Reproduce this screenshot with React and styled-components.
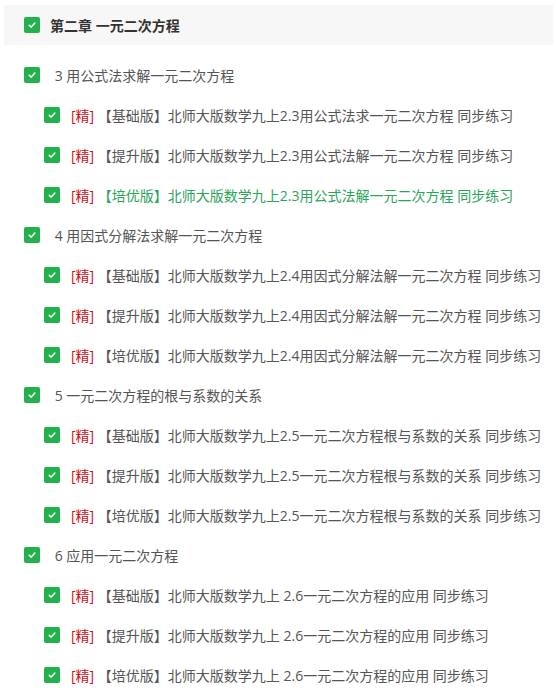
import React from 'react'
import styled, { createGlobalStyle } from 'styled-components'

const GlobalStyle = createGlobalStyle`
  body {
    margin: 0;
    background: #fff;
    font-family: "Open Sans", "Noto Sans CJK SC", sans-serif;
  }
`;

const chapters = [
  {
    title: ' 3 用公式法求解一元二次方程',
    items: [
      { tag: '【基础版】', text: '北师大版数学九上2.3用公式法求一元二次方程 同步练习' },
      { tag: '【提升版】', text: '北师大版数学九上2.3用公式法解一元二次方程 同步练习' },
      { tag: '【培优版】', text: '北师大版数学九上2.3用公式法解一元二次方程 同步练习', active: true },
    ],
  },
  {
    title: ' 4 用因式分解法求解一元二次方程',
    items: [
      { tag: '【基础版】', text: '北师大版数学九上2.4用因式分解法解一元二次方程 同步练习' },
      { tag: '【提升版】', text: '北师大版数学九上2.4用因式分解法解一元二次方程 同步练习' },
      { tag: '【培优版】', text: '北师大版数学九上2.4用因式分解法解一元二次方程 同步练习' },
    ],
  },
  {
    title: ' 5 一元二次方程的根与系数的关系',
    items: [
      { tag: '【基础版】', text: '北师大版数学九上2.5一元二次方程根与系数的关系 同步练习' },
      { tag: '【提升版】', text: '北师大版数学九上2.5一元二次方程根与系数的关系 同步练习' },
      { tag: '【培优版】', text: '北师大版数学九上2.5一元二次方程根与系数的关系 同步练习' },
    ],
  },
  {
    title: ' 6 应用一元二次方程',
    items: [
      { tag: '【基础版】', text: '北师大版数学九上 2.6一元二次方程的应用 同步练习' },
      { tag: '【提升版】', text: '北师大版数学九上 2.6一元二次方程的应用 同步练习' },
      { tag: '【培优版】', text: '北师大版数学九上 2.6一元二次方程的应用 同步练习' },
    ],
  },
];

function Check() {
  return (
    <Box>
      <svg width="10" height="10" viewBox="0 0 10 10">
        <path d="M2.2 5.2 L4.2 7.1 L7.9 3.1" fill="none" stroke="#fff" strokeWidth="1.5" strokeLinecap="round" strokeLinejoin="round" />
      </svg>
    </Box>
  );
}

function App() {
  return (
    <>
      <GlobalStyle />
      <Tree>
        <Header>
          <Check />
          <HeaderTitle>第二章 一元二次方程</HeaderTitle>
        </Header>
        <List>
          {chapters.map((ch) => (
            <React.Fragment key={ch.title}>
              <Row level={1}>
                <Check />
                <Label>{ch.title}</Label>
              </Row>
              {ch.items.map((it, idx) => (
                <Row level={2} key={idx}>
                  <Check />
                  <Label active={it.active}>
                    <Mark>[精]</Mark> {it.tag}{it.text}
                  </Label>
                </Row>
              ))}
            </React.Fragment>
          ))}
        </List>
      </Tree>
    </>
  );
}

const Tree = styled.div`
  padding: 5px 3px 0 4px;
  font-size: 14px;
`;

const Header = styled.div`
  display: flex;
  align-items: center;
  height: 40px;
  padding-left: 20px;
  background: #f7f7f7;
`;

const HeaderTitle = styled.span`
  margin-left: 10px;
  font-weight: bold;
  color: #333;
`;

const List = styled.div`
  margin-top: 10px;
`;

const Row = styled.div`
  display: flex;
  align-items: center;
  height: 40px;
  padding-left: ${(p) => (p.level === 2 ? 40 : 20)}px;
  white-space: nowrap;
`;

const Box = styled.span`
  display: flex;
  align-items: center;
  justify-content: center;
  width: 16px;
  height: 16px;
  flex-shrink: 0;
  border-radius: 2px;
  background: #22b14c;
`;

const Label = styled.span`
  margin-left: 11px;
  color: ${(p) => (p.active ? '#2aa55a' : '#555')};
  white-space: pre;
`;

const Mark = styled.span`
  color: #d0111b;
`;

export default App
